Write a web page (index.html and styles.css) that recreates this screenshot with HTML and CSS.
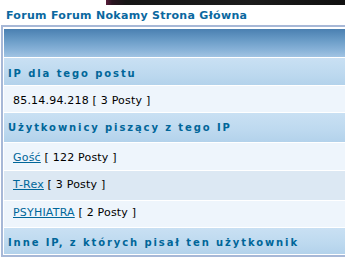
FILE: index.html
```html
<!DOCTYPE html>
<html>
<head>
<meta charset="utf-8">
<link rel="stylesheet" href="styles.css">
</head>
<body>
<div class="banner"></div>
<div class="maintitle">Forum Forum Nokamy Strona Główna</div>
<div class="forumline">
  <div class="thhead"></div>
  <div class="cat">IP dla tego postu</div>
  <div class="row row1 row-a">85.14.94.218 [ 3 Posty ]</div>
  <div class="cat cat-tall">Użytkownicy piszący z tego IP</div>
  <div class="row row1 row-b"><a href="#">Gość</a> [ 122 Posty ]</div>
  <div class="row row2 row-c"><a href="#">T-Rex</a> [ 3 Posty ]</div>
  <div class="row row1 row-d"><a href="#">PSYHIATRA</a> [ 2 Posty ]</div>
  <div class="cat cat-short">Inne IP, z których pisał ten użytkownik</div>
</div>
</body>
</html>
```
FILE: styles.css
```css
html, body {
  margin: 0;
  padding: 0;
  background: #ffffff;
  overflow: hidden;
  font-family: "DejaVu Sans", Verdana, sans-serif;
}
.banner {
  margin-left: 106px;
  height: 5px;
  background: linear-gradient(90deg, #5a1e3c 0px, #2a1420 6px, #161616 20px, #1c1c1c 60%, #101010 100%);
}
.maintitle {
  padding: 2px 0 0 6px;
  height: 18px;
  line-height: 18px;
  font-size: 11px;
  font-weight: bold;
  letter-spacing: 0.3px;
  color: #0a68a0;
  white-space: nowrap;
}
.forumline {
  margin-left: 1px;
  width: 420px;
  border: 2px solid #a7b8d7;
  padding: 2px 1px 1px 1px;
  display: flex;
  flex-direction: column;
  gap: 1px;
  background: #ffffff;
}
.thhead {
  height: 28px;
  background: linear-gradient(180deg, #4a80b1 0%, #6a9cc7 40%, #88b2d8 75%, #a1c4e3 100%);
}
.cat {
  height: 27px;
  box-sizing: border-box;
  padding: 9px 0 0 4px;
  line-height: 14px;
  font-size: 10px;
  font-weight: bold;
  letter-spacing: 1.9px;
  color: #006699;
  background: linear-gradient(180deg, #c9e0f3 0%, #bdd9ef 60%, #b3d2eb 100%);
  white-space: nowrap;
}
.cat-tall { height: 29px; padding-top: 8px; }
.cat-short { height: 26px; padding-top: 8px; }
.row {
  box-sizing: border-box;
  padding-left: 9px;
  line-height: 14px;
  font-size: 11px;
  letter-spacing: 0.2px;
  color: #000000;
  white-space: nowrap;
}
.row-a { height: 26px; padding-top: 8px; }
.row-b { height: 27px; padding-top: 8px; }
.row-c { height: 29px; padding-top: 7px; }
.row-d { height: 26px; padding-top: 5px; }
.row1 { background: #eef5fc; }
.row2 { background: #dce8f3; }
.row a {
  color: #006699;
  text-decoration: underline;
}
```
